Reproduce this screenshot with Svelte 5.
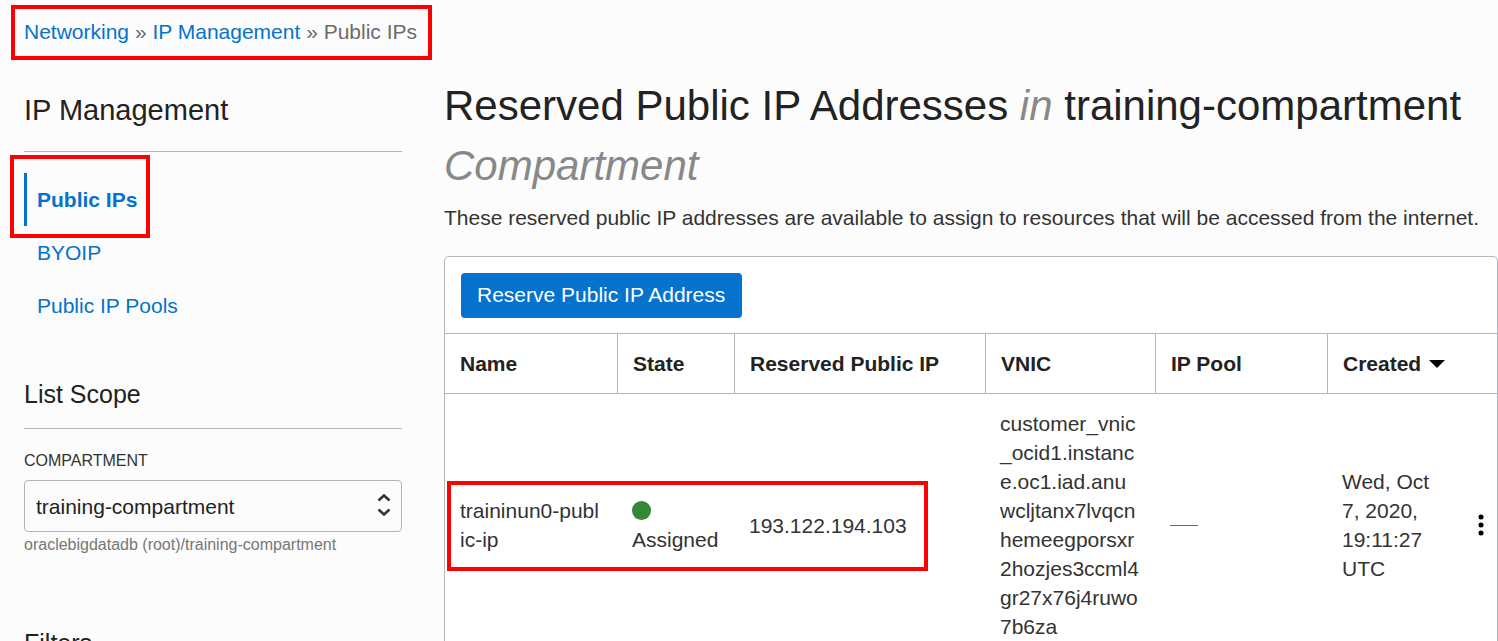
<script>
  const navItems = [
    { label: 'Public IPs', active: true },
    { label: 'BYOIP', active: false },
    { label: 'Public IP Pools', active: false }
  ];
  const headers = ['Name', 'State', 'Reserved Public IP', 'VNIC', 'IP Pool'];
  const rows = [
    {
      name: 'traininun0-public-ip',
      state: 'Assigned',
      ip: '193.122.194.103',
      vnic: ['customer_vnic', '_ocid1.instanc', 'e.oc1.iad.anu', 'wcljtanx7lvqcn', 'hemeegporsxr', '2hozjes3ccml4', 'gr27x76j4ruwo', '7b6za'],
      created: 'Wed, Oct 7, 2020, 19:11:27 UTC'
    }
  ];
  let compartment = $state('training-compartment');
</script>

<div class="page">
  <nav class="crumbs" aria-label="Breadcrumb">
    <a href="#networking">Networking</a>
    <span>»</span>
    <a href="#ip-management">IP Management</a>
    <span>»</span>
    <span>Public IPs</span>
    <i class="mark crumb-mark"></i>
  </nav>

  <div class="columns">
    <aside>
      <h2>IP Management</h2>
      <ul>
        {#each navItems as item}
          <li>
            <a href="#nav" class:active={item.active}>{item.label}</a>
            {#if item.active}<i class="mark nav-mark"></i>{/if}
          </li>
        {/each}
      </ul>

      <h3>List Scope</h3>
      <label for="compartment">COMPARTMENT</label>
      <div class="select">
        <select id="compartment" bind:value={compartment}>
          <option>training-compartment</option>
        </select>
        <svg viewBox="0 0 14 24" width="14" height="24" aria-hidden="true">
          <path d="M1.500 7.500 7 2.500l5.500 5M1.500 16.500l5.500 5 5.500-5" />
        </svg>
      </div>
      <p class="hint">oraclebigdatadb (root)/training-compartment</p>

      <h3 class="filters">Filters</h3>
    </aside>

    <main>
      <h1>Reserved Public IP Addresses <em>in</em> training-compartment <em>Compartment</em></h1>
      <p class="intro">These reserved public IP addresses are available to assign to resources that will be accessed from the internet.</p>

      <section class="panel">
        <div class="toolbar">
          <button class="primary" type="button">Reserve Public IP Address</button>
        </div>
        <table>
          <colgroup>
            <col class="c-name" /><col class="c-state" /><col class="c-ip" /><col class="c-vnic" />
            <col class="c-pool" /><col class="c-created" /><col class="c-menu" />
          </colgroup>
          <thead>
            <tr>
              {#each headers as header}<th>{header}</th>{/each}
              <th colspan="2">
                <button class="sort" type="button">Created
                  <svg viewBox="0 0 16 8" width="16" height="8" aria-hidden="true"><path d="M0 0h16L8 8z" /></svg>
                </button>
              </th>
            </tr>
          </thead>
          <tbody>
            {#each rows as row}
              <tr>
                <td class="break">{row.name}<i class="mark row-mark"></i></td>
                <td><span class="dot"></span>{row.state}</td>
                <td>{row.ip}</td>
                <td class="vnic">{#each row.vnic as part}{part}<wbr />{/each}</td>
                <td><span class="dash"></span></td>
                <td>{row.created}</td>
                <td class="menu">
                  <button type="button" aria-label="Actions">
                    <svg viewBox="0 0 6 22" width="6" height="22" aria-hidden="true">
                      <circle cx="3" cy="3" r="2.500" /><circle cx="3" cy="11" r="2.500" /><circle cx="3" cy="19" r="2.500" />
                    </svg>
                  </button>
                </td>
              </tr>
            {/each}
          </tbody>
        </table>
      </section>
    </main>
  </div>
</div>

<style>
  :global(body) {
    background: #fcfcfc;
  }
  :global(html) {
    scrollbar-width: none;
  }
  .page {
    font-family: "Liberation Sans", Arial, sans-serif;
    font-size: 21px;
    line-height: 29px;
    color: #333;
    padding: 17px 0 0 24px;
  }
  a {
    color: #0572ce;
    text-decoration: none;
  }
  button, select {
    font: inherit;
    color: inherit;
    cursor: pointer;
  }
  .mark {
    position: absolute;
    border: 4px solid #f00;
    pointer-events: none;
  }
  .crumbs {
    position: relative;
    width: fit-content;
    color: #6b6b6b;
  }
  .crumb-mark {
    inset: -12px -15px -14px -13px;
  }
  .columns {
    display: grid;
    grid-template-columns: 378px minmax(0, 1fr);
    column-gap: 42px;
    padding-top: 30px;
  }
  h1, h2, h3 {
    margin: 0;
    font-weight: 400;
    color: #222;
  }
  h2 {
    font-size: 29px;
    line-height: 36px;
    padding: 16px 0 23px;
    border-bottom: 1px solid #b0b6c0;
  }
  ul {
    list-style: none;
    margin: 0;
    padding: 21px 0 47px;
  }
  li {
    position: relative;
    width: fit-content;
  }
  li a {
    display: block;
    line-height: 53px;
    padding-left: 13px;
  }
  li a.active {
    padding-left: 10px;
    border-left: 3px solid #0572ce;
    font-weight: 700;
  }
  .nav-mark {
    inset: -18px -13px -12px -14px;
    z-index: 1;
  }
  h3 {
    font-size: 25px;
    line-height: 30px;
    padding-bottom: 19px;
    border-bottom: 1px solid #b0b6c0;
  }
  label {
    display: block;
    font-size: 16px;
    line-height: 22px;
    padding: 21px 0 8px;
  }
  .select {
    position: relative;
  }
  select {
    appearance: none;
    display: block;
    width: 100%;
    height: 52px;
    padding: 0 40px 0 11px;
    border: 1px solid #b0b6c0;
    border-radius: 4px;
    background: transparent;
    color: #222;
  }
  .select svg {
    position: absolute;
    right: 11px;
    top: 13px;
    fill: none;
    stroke: #333;
    stroke-width: 2.5;
    pointer-events: none;
  }
  .hint {
    margin: 0;
    font-size: 16px;
    line-height: 26px;
    color: #777;
  }
  .filters {
    padding-top: 70px;
  }
  h1 {
    font-size: 42px;
    line-height: 60px;
  }
  h1 em {
    color: #888;
  }
  .intro {
    margin: 0;
    padding: 7px 0 24px;
  }
  .panel {
    border: 1px solid #b0b6c0;
    border-radius: 5px;
    background: #fff;
  }
  .toolbar {
    padding: 16px 16px 15px;
  }
  .primary {
    display: block;
    height: 45px;
    padding: 0 17px 2px 16px;
    border: 0;
    border-radius: 4px;
    background: #0572ce;
    color: #fff;
  }
  table {
    width: 100%;
    table-layout: fixed;
    border-collapse: separate;
    border-spacing: 0;
  }
  .c-name { width: 173px; }
  .c-state { width: 117px; }
  .c-ip { width: 251px; }
  .c-vnic { width: 170px; }
  .c-pool { width: 172px; }
  .c-created { width: 119px; }
  .c-menu { width: 50px; }
  th {
    height: 59px;
    padding: 0 0 0 15px;
    border: 1px solid #b0b6c0;
    border-width: 1px 1px 1px 0;
    text-align: left;
    color: #222;
  }
  th:last-child {
    border-right: 0;
  }
  .sort {
    display: flex;
    align-items: center;
    gap: 8px;
    padding: 0;
    border: 0;
    background: none;
  }
  .sort path {
    fill: #000;
  }
  tbody tr {
    position: relative;
  }
  td {
    padding: 15px 14px;
    vertical-align: middle;
  }
  .break {
    padding: 15px 18px 15px 15px;
    word-break: break-all;
  }
  .vnic {
    padding-right: 8px;
  }
  .dot {
    display: block;
    width: 19px;
    height: 19px;
    margin: 5px 0;
    border-radius: 50%;
    background: #358738;
  }
  .dash {
    display: block;
    width: 28px;
    height: 1px;
    background: #666;
  }
  td.menu {
    padding: 0 13px 0 0;
  }
  .menu button {
    display: block;
    margin-left: auto;
    padding: 0;
    border: 0;
    background: none;
  }
  .menu svg {
    display: block;
  }
  .row-mark {
    left: 2px;
    top: calc(50% - 44px);
    width: 473px;
    height: 82px;
  }
</style>
